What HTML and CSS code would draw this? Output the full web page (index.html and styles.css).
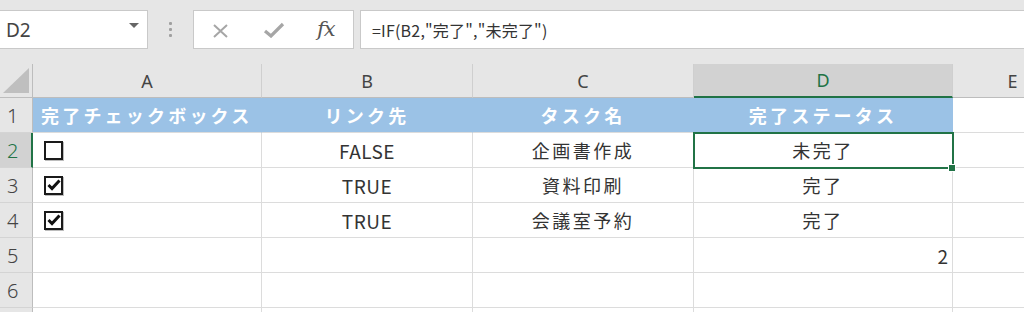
FILE: index.html
```html
<!DOCTYPE html>
<html lang="ja">
<head>
<meta charset="utf-8">
<title>Excel</title>
<link rel="stylesheet" href="styles.css">
</head>
<body>
<div class="app">
  <div class="toolbar">
    <div class="namebox"><span class="ref">D2</span><span class="caret"></span></div>
    <div class="grip"><i></i><i></i><i></i></div>
    <div class="fbtns">
      <svg class="ico" width="20" height="14" viewBox="0 0 20 14"><path d="M3 1 L16 13 M16 1 L3 13" stroke="#a6a6a6" stroke-width="2" fill="none"/></svg>
      <svg class="ico" width="22" height="16" viewBox="0 0 22 16"><path d="M2 9 L8 14 L20 2" stroke="#a6a6a6" stroke-width="3.2" fill="none"/></svg>
      <span class="fx">fx</span>
    </div>
    <div class="formula">=IF(B2,"完了","未完了")</div>
  </div>
  <div class="sheet">
    <div class="corner"><span class="tri"></span></div>
    <div class="ch">A</div>
    <div class="ch">B</div>
    <div class="ch">C</div>
    <div class="ch ch-sel">D</div>
    <div class="ch">E</div>

    <div class="rh">1</div>
    <div class="c hd left">完了チェックボックス</div>
    <div class="c hd">リンク先</div>
    <div class="c hd">タスク名</div>
    <div class="c hd">完了ステータス</div>
    <div class="c"></div>

    <div class="rh rh-sel">2</div>
    <div class="c left"><span class="cb"></span></div>
    <div class="c latin">FALSE</div>
    <div class="c">企画書作成</div>
    <div class="c sel">未完了<span class="handle"></span></div>
    <div class="c"></div>

    <div class="rh">3</div>
    <div class="c left"><span class="cb on"><svg width="14" height="12" viewBox="0 0 14 12"><path d="M1.5 6 L5 9.5 L12.5 1.5" stroke="#111" stroke-width="3" fill="none"/></svg></span></div>
    <div class="c latin">TRUE</div>
    <div class="c">資料印刷</div>
    <div class="c">完了</div>
    <div class="c"></div>

    <div class="rh">4</div>
    <div class="c left"><span class="cb on"><svg width="14" height="12" viewBox="0 0 14 12"><path d="M1.5 6 L5 9.5 L12.5 1.5" stroke="#111" stroke-width="3" fill="none"/></svg></span></div>
    <div class="c latin">TRUE</div>
    <div class="c">会議室予約</div>
    <div class="c">完了</div>
    <div class="c"></div>

    <div class="rh">5</div>
    <div class="c"></div>
    <div class="c"></div>
    <div class="c"></div>
    <div class="c right">2</div>
    <div class="c"></div>

    <div class="rh">6</div>
    <div class="c"></div>
    <div class="c"></div>
    <div class="c"></div>
    <div class="c"></div>
    <div class="c"></div>

    <div class="rh"></div>
    <div class="c"></div>
    <div class="c"></div>
    <div class="c"></div>
    <div class="c"></div>
    <div class="c"></div>
  </div>
</div>
</body>
</html>
```

FILE: styles.css
```css
* { box-sizing: border-box; }
html, body { margin: 0; padding: 0; }
body {
  width: 1024px;
  height: 312px;
  overflow: hidden;
  background: #ffffff;
  font-family: "Noto Sans CJK JP", "Noto Sans", sans-serif;
}
.app { width: 1024px; height: 312px; overflow: hidden; }

.toolbar {
  height: 64px;
  background: #e6e6e6;
  display: flex;
  align-items: flex-start;
  padding-top: 10px;
}
.namebox {
  width: 149px;
  height: 39px;
  margin-left: -1px;
  background: #fff;
  border: 1px solid #c9c9c9;
  display: flex;
  align-items: center;
  justify-content: space-between;
  padding: 0 8px 0 6px;
}
.ref {
  font-family: "Noto Sans", sans-serif;
  font-size: 19px;
  color: #444;
}
.caret {
  width: 0; height: 0;
  border-left: 5px solid transparent;
  border-right: 5px solid transparent;
  border-top: 5px solid #666;
  margin-top: -8px;
}
.grip {
  width: 45px;
  height: 39px;
  display: flex;
  flex-direction: column;
  align-items: center;
  justify-content: center;
  gap: 3px;
}
.grip i {
  display: block;
  width: 3px; height: 3px;
  background: #a0a0a0;
  border-radius: 1px;
}
.fbtns {
  width: 161px;
  height: 39px;
  background: #fff;
  border: 1px solid #c9c9c9;
  display: flex;
  align-items: center;
  padding-left: 17px;
}
.fbtns .ico:nth-child(1) { margin-top: 2px; }
.fbtns .ico:nth-child(2) { margin-left: 32px; }
.fx {
  margin-left: 32px;
  font-family: "DejaVu Serif", "Liberation Serif", serif;
  font-style: italic;
  font-size: 21px;
  color: #555;
  letter-spacing: -1px;
  margin-top: -2px;
}
.formula {
  flex: 1;
  margin-left: 6px;
  height: 39px;
  background: #fff;
  border: 1px solid #c9c9c9;
  border-right: none;
  display: flex;
  align-items: center;
  padding-left: 11px;
  font-size: 16px;
  color: #333;
  letter-spacing: 0.2px;
}

.sheet {
  display: grid;
  grid-template-columns: 33px 229px 211px 221px 259px 120px;
  grid-template-rows: 34px repeat(7, 35px);
  width: 1073px;
}
.corner {
  background: #e6e6e6;
  border-right: 1px solid #bdbdbd;
  border-bottom: 1px solid #bdbdbd;
  display: flex;
  align-items: flex-end;
  justify-content: flex-end;
  padding: 0 3px 4px 0;
}
.tri {
  width: 0; height: 0;
  border-left: 26px solid transparent;
  border-bottom: 25px solid #bfbfbf;
}
.ch {
  background: #e6e6e6;
  border-right: 1px solid #cfcfcf;
  border-bottom: 1px solid #bdbdbd;
  display: flex;
  align-items: center;
  justify-content: center;
  font-family: "Noto Sans", sans-serif;
  font-size: 18px;
  color: #444;
}
.ch-sel {
  background: #d2d2d2;
  border-bottom: 2px solid #217346;
  color: #217346;
}
.rh {
  background: #e6e6e6;
  border-right: 1px solid #bdbdbd;
  border-bottom: 1px solid #d4d4d4;
  display: flex;
  align-items: center;
  padding-left: 7px;
  font-family: "Noto Sans", sans-serif;
  font-size: 20px;
  font-weight: 300;
  color: #444;
}
.rh-sel {
  background: #d2d2d2;
  border-right: 2px solid #217346;
  color: #217346;
}
.c {
  border-right: 1px solid #dcdcdc;
  border-bottom: 1px solid #dcdcdc;
  display: flex;
  align-items: center;
  justify-content: center;
  font-size: 18px;
  letter-spacing: 2.5px;
  color: #333;
  white-space: nowrap;
}
.c.latin { font-size: 19px; letter-spacing: 0.5px; }
.c.left { justify-content: flex-start; padding-left: 8px; }
.c.right { justify-content: flex-end; padding-right: 4px; letter-spacing: 0; font-size: 19px; }
.c.hd {
  background: #9bc2e6;
  border-right-color: #9bc2e6;
  color: #fff;
  font-weight: bold;
  letter-spacing: 3.2px;
}
.sel { position: relative; }
.sel::after {
  content: "";
  position: absolute;
  left: -1px; top: -1px; right: -2px; bottom: -2px;
  border: 2px solid #217346;
}
.handle {
  position: absolute;
  right: -4px; bottom: -5px;
  width: 8px; height: 8px;
  background: #217346;
  border: 1px solid #fff;
  z-index: 2;
}
.cb {
  width: 19px; height: 19px;
  margin-left: 3px;
  border: 2px solid #1a1a1a;
  background: #fff;
  box-shadow: 1px 1px 0 #bcbcbc;
  display: flex;
  align-items: center;
  justify-content: center;
}
```
